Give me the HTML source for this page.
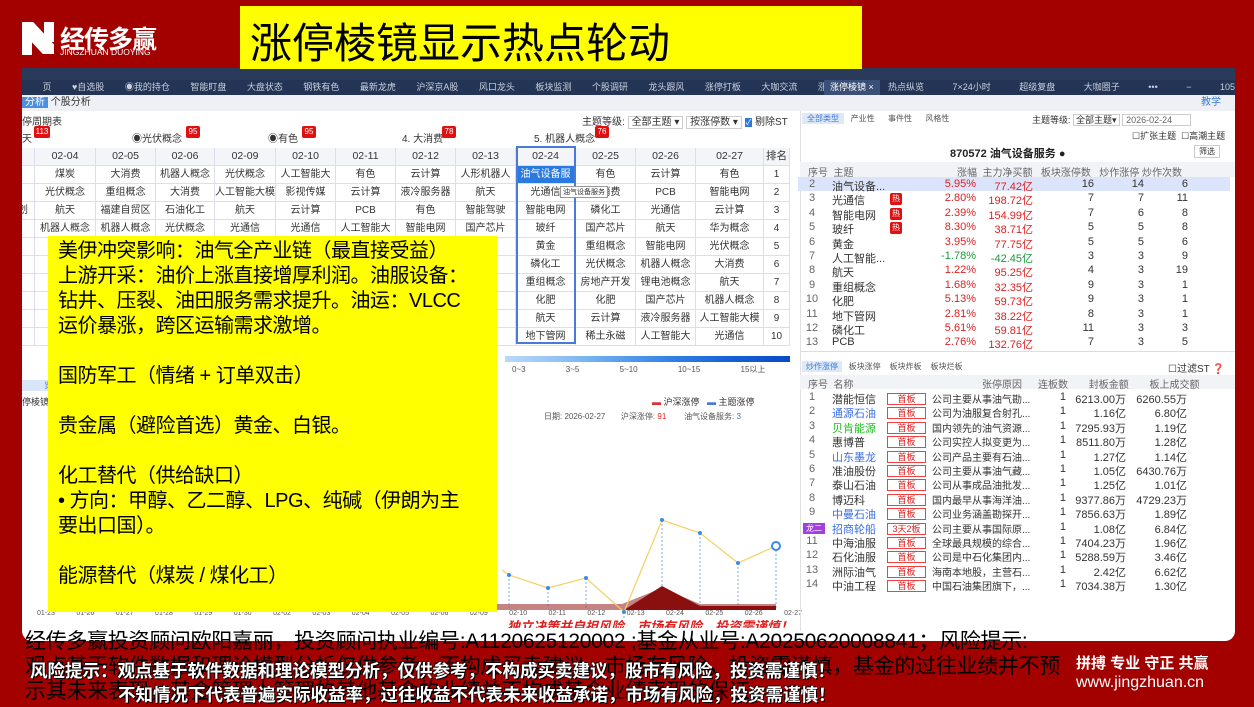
<!DOCTYPE html>
<html><head><meta charset="utf-8"><style>
*{margin:0;padding:0;box-sizing:border-box}
body{width:1254px;height:704px;overflow:hidden;background:#a30000;font-family:"Liberation Sans","Noto Sans CJK SC",sans-serif;position:relative;color:#333}
.a{position:absolute;white-space:nowrap}
.panel{position:absolute;left:22px;top:68px;width:1213px;height:573px;background:#fff;border-radius:0 0 10px 10px;overflow:hidden}
.g{position:absolute;font-size:10px;color:#333;text-align:center;border-right:1px solid #dde;border-bottom:1px solid #dde;height:18px;line-height:17px;overflow:hidden}
.rt{position:absolute;font-size:11px;white-space:nowrap}
.red{color:#e02020}.grn{color:#1a9a3a}
.badge{position:absolute;width:12px;height:12px;background:#e01010;color:#fff;font-size:8px;line-height:12px;text-align:center;border-radius:2px}
.sb{position:absolute;width:39px;height:12px;border:1px solid #f04040;color:#e02020;font-size:9px;line-height:10px;text-align:center}
.ft{position:absolute;white-space:nowrap;font-size:21px;color:#000;z-index:7;letter-spacing:-0.3px}
</style></head><body>
<!-- logo -->
<div class="a" style="left:22px;top:22px;width:32px;height:32px;background:#fff;clip-path:polygon(0 0,35% 0,100% 70%,100% 100%,65% 100%,0 30%)"></div>
<div class="a" style="left:22px;top:22px;width:10px;height:33px;background:#fff"></div>
<div class="a" style="left:44px;top:22px;width:10px;height:20px;background:#fff"></div>
<div class="a" style="left:60px;top:20px;color:#fff;font-size:25px;font-weight:bold;letter-spacing:-1px">经传多赢</div>
<div class="a" style="left:60px;top:47px;color:#fff;font-size:8.5px">JINGZHUAN DUOYING</div>
<div class="a" style="left:240px;top:6px;width:622px;height:63px;background:#ffff00;z-index:5"><span class="a" style="left:10px;top:4px;font-size:42px;color:#000">涨停棱镜显示热点轮动</span></div>
<div class="panel">
 <div class="a" style="left:0;top:0;width:1213px;height:12px;background:#2a3a5a"></div>
 <div class="a" style="left:0;top:12px;width:1213px;height:15px;background:#243454;font-size:9px;color:#c8d0e0;line-height:15px;word-spacing:18px">&nbsp;页 ♥自选股 ◉我的持仓 智能盯盘 大盘状态 钢铁有色 最新龙虎 沪深京A股 风口龙头 板块监测 个股调研 龙头跟风 涨停打板 大咖交流 涨停盘</div>
 <div class="a" style="left:802px;top:12px;width:56px;height:15px;background:#3b5077;color:#fff;font-size:9px;line-height:15px;padding-left:6px">涨停棱镜 ×</div>
 <div class="a" style="left:866px;top:12px;font-size:9px;color:#c8d0e0;line-height:15px;word-spacing:26px">热点纵览 7×24小时 超级复盘 大咖圈子 ••• − 105% + ★</div>
 <div class="a" style="left:0;top:27px;width:780px;height:16px;background:#eef0f5;font-size:10px;line-height:16px"><span style="background:#4a8fe0;color:#fff;padding:0 3px">分析</span> 个股分析</div>
 <div class="a" style="left:780px;top:27px;width:433px;height:16px;background:#eef0f5;font-size:10px;color:#3a7ad8;text-align:right;padding-right:14px;line-height:16px">教学</div>
 <div class="a" style="left:0;top:45px;font-size:10px">停周期表</div>
 <div class="a" style="left:560px;top:45px;font-size:10px">主题等级: <span style="border:1px solid #ccc;padding:0 3px">全部主题 ▾</span> <span style="border:1px solid #ccc;padding:0 3px">按涨停数 ▾</span> <span style="background:#2b7ae0;color:#fff;font-size:8px;padding:0 1px">✓</span> 剔除ST</div>
 <div class="a" style="left:0;top:62px;font-size:10px;width:780px;height:14px">
  <span class="a" style="left:0">天</span><span class="badge" style="left:12px;top:-4px;width:16px">113</span>
  <span class="a" style="left:110px">◉光伏概念</span><span class="badge" style="left:164px;top:-4px;width:14px">95</span>
  <span class="a" style="left:246px">◉有色</span><span class="badge" style="left:280px;top:-4px;width:14px">95</span>
  <span class="a" style="left:380px">4. 大消费</span><span class="badge" style="left:420px;top:-4px;width:14px">78</span>
  <span class="a" style="left:512px">5. 机器人概念</span><span class="badge" style="left:573px;top:-4px;width:14px">76</span>
 </div>
 <div id="grid"></div>
 <div class="a" style="left:494px;top:78px;width:60px;height:198px;border:2px solid #4a7ad8;z-index:2"></div>
 <div class="a" style="left:483px;top:288px;width:285px;height:6px;background:linear-gradient(90deg,#bcd8f8 0,#8fc0f5 20%,#5aa0ee 40%,#2f7ee4 60%,#1560d4 80%,#0a4bc4)"></div>
 <div class="a" style="left:490px;top:296px;font-size:8px;color:#555;word-spacing:38px">0~3 3~5 5~10 10~15 15以上</div>
 <div class="a" style="left:0;top:312px;width:40px;height:11px;background:#d8e6f8;font-size:8px;color:#3a7ad8">&nbsp;&nbsp;&nbsp;&nbsp;&nbsp;&nbsp;&nbsp;&nbsp;&nbsp;&nbsp;览</div>
 <div class="a" style="left:0;top:327px;font-size:9px">停棱镜</div>
 <div class="a" style="left:630px;top:327px;font-size:9px"><span style="color:#e03030">▬</span> 沪深涨停 &nbsp;&nbsp;<span style="color:#4a7ad8">▬</span> 主题涨停</div>
 <div class="a" style="left:522px;top:343px;font-size:8px;color:#555">日期: 2026-02-27 &nbsp;&nbsp;&nbsp;&nbsp;&nbsp;&nbsp;沪深涨停: <span class="red">91</span>&nbsp;&nbsp;&nbsp;&nbsp;&nbsp;&nbsp;&nbsp;&nbsp;油气设备服务: <span style="color:#3a7ad8">3</span></div>
 <svg class="a" style="left:0;top:300px" width="780" height="260">
  <g stroke="#7aa8ee" stroke-dasharray="2,2" stroke-width="1">
   <line x1="487" y1="207" x2="487" y2="240"/><line x1="526" y1="220" x2="526" y2="240"/><line x1="564" y1="210" x2="564" y2="240"/><line x1="602" y1="244" x2="602" y2="250"/><line x1="640" y1="152" x2="640" y2="240"/><line x1="678" y1="165" x2="678" y2="240"/><line x1="716" y1="195" x2="716" y2="240"/><line x1="754" y1="178" x2="754" y2="240"/>
  </g>
  <polygon points="470,236 600,236 640,220 678,236 754,236 754,242 470,242" fill="#a03030" opacity=".6"/>
  <polygon points="602,242 640,218 678,238 754,238 754,242" fill="#8a1010"/>
  <polyline points="480,202 487,207 526,220 564,210 602,244 640,152 678,165 716,195 754,178" fill="none" stroke="#f5d060" stroke-width="1.2"/>
  <g fill="#3a8ae8"><circle cx="487" cy="207" r="2"/><circle cx="526" cy="220" r="2"/><circle cx="564" cy="210" r="2"/><circle cx="602" cy="244" r="2"/><circle cx="640" cy="152" r="2"/><circle cx="678" cy="165" r="2"/><circle cx="716" cy="195" r="2"/><circle cx="754" cy="178" r="4" fill="#fff" stroke="#3a8ae8" stroke-width="2"/></g>
  <text x="485" y="263" font-size="13" fill="#e02020" font-weight="bold" font-style="italic" font-family="Liberation Sans,Noto Sans CJK SC,sans-serif">独立决策并自担风险，市场有风险，投资需谨慎！</text>
 </svg>
 <div class="a" style="left:15px;top:542px;font-size:7px;color:#555;word-spacing:19.5px">01-23 01-26 01-27 01-28 01-29 01-30 02-02 02-03 02-04 02-05 02-06 02-09 02-10 02-11 02-12 02-13 02-24 02-25 02-26 02-27</div>
 <div class="a" style="left:778px;top:43px;width:1px;height:520px;background:#e0e0e0"></div>
 <div class="a" style="left:780px;top:45px;font-size:8px;color:#555"><span style="background:#dde8f8;color:#3a7ad8;padding:1px 5px">全部类型</span> &nbsp;&nbsp;产业性 &nbsp;&nbsp;&nbsp;&nbsp;&nbsp;事件性 &nbsp;&nbsp;&nbsp;&nbsp;&nbsp;风格性</div>
 <div class="a" style="left:1010px;top:45px;font-size:9px">主题等级: <span style="border:1px solid #ccc;padding:0 2px">全部主题▾</span> <span style="border:1px solid #ccc;padding:0 18px 0 3px;color:#666">2026-02-24</span></div>
 <div class="a" style="left:1110px;top:61px;font-size:9px">☐扩张主题 &nbsp;☐高潮主题</div>
 <div class="a" style="left:928px;top:77px;font-size:11px;font-weight:bold;color:#222">870572 油气设备服务 ●</div>
 <div class="a" style="left:1172px;top:77px;font-size:8px;border:1px solid #ccc;padding:0 4px">筛选</div>
 <div class="a" style="left:778px;top:94px;width:435px;height:15px;background:#f2f3f6"></div>
 <div class="a" style="left:776px;top:109px;width:432px;height:14px;background:#dbe4fa"></div>
 <div id="rt"></div>
 <div class="a" style="left:778px;top:283px;width:435px;height:1px;background:#ddd"></div>
 <div class="a" style="left:780px;top:293px;font-size:8px;color:#555"><span style="background:#dde8f8;color:#3a7ad8;padding:1px 4px">炒作涨停</span> &nbsp;&nbsp;板块涨停 &nbsp;&nbsp;&nbsp;板块炸板 &nbsp;&nbsp;&nbsp;板块烂板</div>
 <div class="a" style="left:1146px;top:292px;font-size:10px">☐过滤ST ❓</div>
 <div class="a" style="left:778px;top:307px;width:435px;height:14px;background:#f2f3f6"></div>
 <div id="rb"></div>
</div>
<div class="a" style="left:48px;top:236px;width:449px;height:376px;background:#ffff00;z-index:6;padding:3px 10px;font-size:20px;line-height:25px;color:#000;overflow:hidden;letter-spacing:-0.5px">美伊冲突影响：油气全产业链（最直接受益）<br>上游开采：油价上涨直接增厚利润。油服设备：<br>钻井、压裂、油田服务需求提升。油运：VLCC<br>运价暴涨，跨区运输需求激增。<br><br>国防军工（情绪 + 订单双击）<br><br>贵金属（避险首选）黄金、白银。<br><br>化工替代（供给缺口）<br>• 方向：甲醇、乙二醇、LPG、纯碱（伊朗为主<br>要出口国）。<br><br>能源替代（煤炭 / 煤化工）</div>
<div class="ft" style="left:25px;top:625px">经传多赢投资顾问欧阳嘉丽，投资顾问执业编号:A1120625120002 ;基金从业号:A20250620008841；风险提示:</div>
<div class="ft" style="left:25px;top:650px">观点基于软件数据和理论模型分析仅供参考，不构成买卖建议，市场有风险，投资需谨慎，基金的过往业绩并不预</div>
<div class="ft" style="left:25px;top:675px">示其未来表现，基金管理人管理的其他基金的业绩并不构成基金业绩表现的保证</div>
<div class="a" style="left:30px;top:658px;font-size:17.5px;color:#fff;font-weight:bold;z-index:8;text-shadow:1px 1px 0 #000,-1px -1px 0 #000">风险提示：观点基于软件数据和理论模型分析，仅供参考，不构成买卖建议，股市有风险，投资需谨慎！</div>
<div class="a" style="left:118px;top:682px;font-size:17.5px;color:#fff;font-weight:bold;z-index:8;text-shadow:1px 1px 0 #000,-1px -1px 0 #000">不知情况下代表普遍实际收益率，过往收益不代表未来收益承诺，市场有风险，投资需谨慎！</div>
<div class="a" style="left:1076px;top:652px;font-size:15px;color:#fff;font-weight:bold">拼搏 专业 守正 共赢</div>
<div class="a" style="left:1076px;top:674px;font-size:16px;color:#fff">www.jingzhuan.cn</div>
<script>
var cols=[-10,13,74,134,193,254,314,374,434,494,554,614,674,742,768];
var hdr=['','02-04','02-05','02-06','02-09','02-10','02-11','02-12','02-13','02-24','02-25','02-26','02-27','排名'];
var rows=[
['','煤炭','大消费','机器人概念','光伏概念','人工智能大模型','有色','云计算','人形机器人','油气设备服务','有色','云计算','有色','1'],
['','光伏概念','重组概念','大消费','人工智能大模型','影视传媒','云计算','液冷服务器','航天','光通信','大消费','PCB','智能电网','2'],
['划','航天','福建自贸区','石油化工','航天','云计算','PCB','有色','智能驾驶','智能电网','磷化工','光通信','云计算','3'],
['','机器人概念','机器人概念','光伏概念','光通信','光通信','人工智能大模型','智能电网','国产芯片','玻纤','国产芯片','航天','华为概念','4'],
['','','','','','','','','','黄金','重组概念','智能电网','光伏概念','5'],
['','','','','','','','','','磷化工','光伏概念','机器人概念','大消费','6'],
['','','','','','','','','','重组概念','房地产开发','锂电池概念','航天','7'],
['','','','','','','','','','化肥','化肥','国产芯片','机器人概念','8'],
['','','','','','','','','','航天','云计算','液冷服务器','人工智能大模型','9'],
['','','','','','','','','','地下管网','稀土永磁','人工智能大模型','光通信','10']];
var h='';
for(var r=0;r<11;r++){var d=r==0?hdr:rows[r-1];for(var c=0;c<14;c++){var x=cols[c],w=cols[c+1]-x;var st='left:'+x+'px;top:'+(80+r*18)+'px;width:'+w+'px;';if(r==0)st+='background:#f4f5f8;font-size:10.5px;';if(r==1&&c==9)st+='background:#2b7ae0;color:#fff;';h+='<div class="g" style="'+st+'">'+d[c]+'</div>';}}
h+='<div class="a" style="left:538px;top:118px;font-size:7px;background:#fff;border:1px solid #999;padding:0 2px;z-index:3">油气设备服务</div>';
document.getElementById('grid').innerHTML=h;
var R=[['2','油气设备...','5.95%','77.42亿','16','14','6',0],['3','光通信','2.80%','198.72亿','7','7','11',1],['4','智能电网','2.39%','154.99亿','7','6','8',1],['5','玻纤','8.30%','38.71亿','5','5','8',1],['6','黄金','3.95%','77.75亿','5','5','6',0],['7','人工智能...','-1.78%','-42.45亿','3','3','9',0],['8','航天','1.22%','95.25亿','4','3','19',0],['9','重组概念','1.68%','32.35亿','9','3','1',0],['10','化肥','5.13%','59.73亿','9','3','1',0],['11','地下管网','2.81%','38.22亿','8','3','1',0],['12','磷化工','5.61%','59.81亿','11','3','3',0],['13','PCB','2.76%','132.76亿','7','3','5',0]];
var o='<div class="rt" style="left:786px;top:96px;font-size:10px;color:#666">序号&nbsp;&nbsp;主题</div><div class="rt" style="left:935px;top:96px;font-size:10px;color:#666">涨幅&nbsp;&nbsp;主力净买额&nbsp;&nbsp;&nbsp;板块涨停数&nbsp;&nbsp;&nbsp;炒作涨停&nbsp;炒作次数</div>';
R.forEach(function(a,i){var y=110+i*14.4;var cl=a[2][0]=='-'?'grn':'red';
o+='<div class="rt" style="left:780px;top:'+y+'px;width:20px;text-align:center;color:#666">'+a[0]+'</div><div class="rt" style="left:810px;top:'+y+'px">'+a[1]+'</div>';
if(a[7])o+='<div class="badge" style="left:868px;top:'+(y+1)+'px">热</div>';
o+='<div class="rt '+cl+'" style="left:900px;top:'+y+'px;width:54px;text-align:right">'+a[2]+'</div><div class="rt '+cl+'" style="left:950px;top:'+y+'px;width:61px;text-align:right">'+a[3]+'</div><div class="rt" style="left:1040px;top:'+y+'px;width:32px;text-align:right">'+a[4]+'</div><div class="rt" style="left:1090px;top:'+y+'px;width:32px;text-align:right">'+a[5]+'</div><div class="rt" style="left:1134px;top:'+y+'px;width:32px;text-align:right">'+a[6]+'</div>';});
document.getElementById('rt').innerHTML=o;
var B=[['潜能恒信','首板','公司主要从事油气勘...','6213.00万','6260.55万','#333'],['通源石油','首板','公司为油服复合射孔...','1.16亿','6.80亿','#3a6ee8'],['贝肯能源','首板','国内领先的油气资源...','7295.93万','1.19亿','#20c020'],['惠博普','首板','公司实控人拟变更为...','8511.80万','1.28亿','#333'],['山东墨龙','首板','公司产品主要有石油...','1.27亿','1.14亿','#3a6ee8'],['准油股份','首板','公司主要从事油气藏...','1.05亿','6430.76万','#333'],['泰山石油','首板','公司从事成品油批发...','1.25亿','1.01亿','#333'],['博迈科','首板','国内最早从事海洋油...','9377.86万','4729.23万','#333'],['中曼石油','首板','公司业务涵盖勘探开...','7856.63万','1.89亿','#3a6ee8'],['招商轮船','3天2板','公司主要从事国际原...','1.08亿','6.84亿','#3a6ee8'],['中海油服','首板','全球最具规模的综合...','7404.23万','1.96亿','#333'],['石化油服','首板','公司是中石化集团内...','5288.59万','3.46亿','#333'],['洲际油气','首板','海南本地股，主营石...','2.42亿','6.62亿','#333'],['中油工程','首板','中国石油集团旗下，...','7034.38万','1.30亿','#333']];
var p='<div class="rt" style="left:786px;top:308px;font-size:10px;color:#666">序号&nbsp;&nbsp;名称</div><div class="rt" style="left:960px;top:308px;font-size:10px;color:#666">张停原因</div><div class="rt" style="left:1016px;top:308px;font-size:10px;color:#666;word-spacing:18px">连板数 封板金额 板上成交额</div>';
B.forEach(function(a,i){var y=323+i*14.4;
p+=(i==9?'<div class="rt" style="left:781px;top:'+(y+2)+'px;font-size:8px;background:#a040e0;color:#fff;padding:0 3px">龙二</div>':'<div class="rt" style="left:780px;top:'+y+'px;width:20px;text-align:center;color:#666">'+(i+1)+'</div>')+'<div class="rt" style="left:810px;top:'+y+'px;color:'+a[5]+'">'+a[0]+'</div><div class="sb" style="left:865px;top:'+(y+2)+'px">'+a[1]+'</div><div class="rt" style="left:910px;top:'+y+'px;font-size:10px">'+a[2]+'</div><div class="rt" style="left:1030px;top:'+y+'px;width:14px;text-align:right">1</div><div class="rt" style="left:1040px;top:'+y+'px;width:64px;text-align:right">'+a[3]+'</div><div class="rt" style="left:1100px;top:'+y+'px;width:65px;text-align:right">'+a[4]+'</div>';});
document.getElementById('rb').innerHTML=p;
</script>
</body></html>
